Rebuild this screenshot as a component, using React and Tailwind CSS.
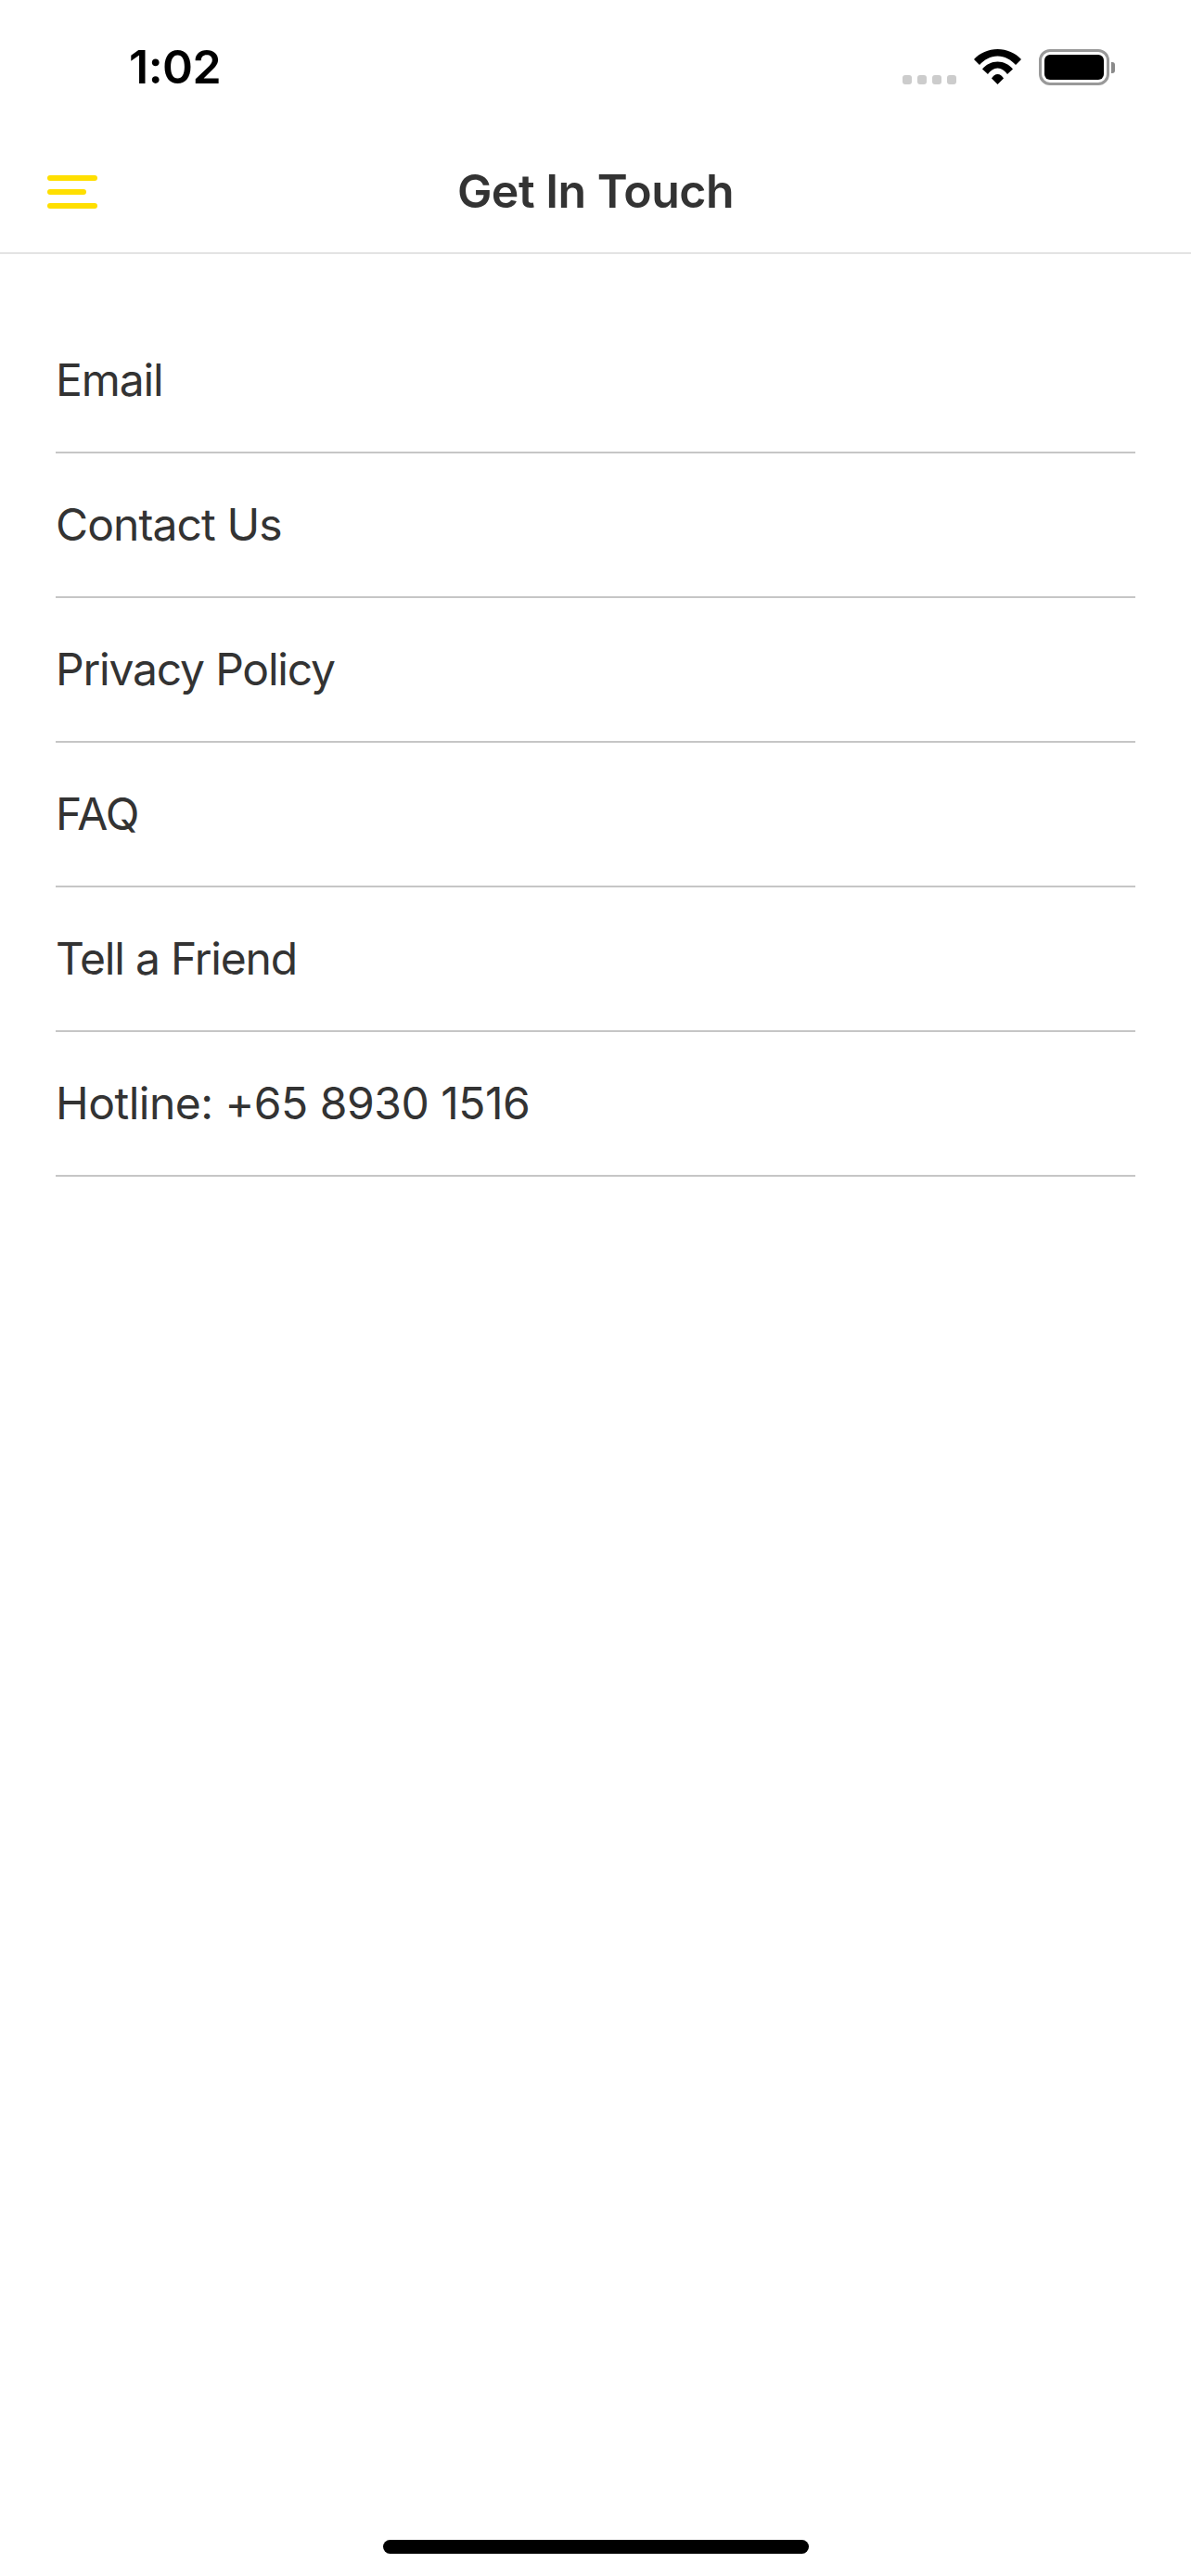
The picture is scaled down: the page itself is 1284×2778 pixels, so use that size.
const items = [
  { label: 'Email', cls: 'tracking-[-1.1px]' },
  { label: 'Contact Us', cls: 'tracking-[-0.9px]' },
  { label: 'Privacy Policy', cls: 'tracking-[-1.2px]' },
  { label: 'FAQ', cls: 'tracking-[-0.8px]' },
  { label: 'Tell a Friend', cls: 'tracking-[-1.2px]' },
  { label: 'Hotline: +65 8930 1516', cls: 'tracking-[-0.5px]' },
];

function WifiIcon() {
  return (
    <svg width="51" height="38" viewBox="0 0 51 38" fill="#000">
      <path d="M0 11C6.500 4 15.500 0 25.500 0S44.500 4 51 11L45 17C40 11.500 33.200 7.500 25.500 7.500S11 11.500 6 17Z" />
      <path d="M9 21.500C13 16.500 19 13.500 25.500 13.500S38 16.500 42 21.500L36 27C33.500 23.500 29.800 20.500 25.500 20.500S17.500 23.500 15 27Z" />
      <path d="M19 31.500C20.500 28.800 23 27 25.500 27S30.500 28.800 32 31.500L25.500 38Z" />
    </svg>
  );
}

function StatusBar() {
  return (
    <div className="h-[164px] flex items-start justify-between text-black">
      <span className="ml-[139px] mt-[43px] text-[50px] leading-[58px] font-semibold tracking-[-0.5px]">1:02</span>
      <div className="flex items-start mt-[53px] mr-[82px]">
        <div className="flex gap-[6px] mt-[28px] mr-[19px]">
          <div className="w-[10px] h-[10px] rounded-[3px] bg-[#cccccc]"></div>
          <div className="w-[10px] h-[10px] rounded-[3px] bg-[#cccccc]"></div>
          <div className="w-[10px] h-[10px] rounded-[3px] bg-[#cccccc]"></div>
          <div className="w-[10px] h-[10px] rounded-[3px] bg-[#cccccc]"></div>
        </div>
        <WifiIcon />
        <div className="flex items-center ml-[19px]">
          <div className="w-[76px] h-[39px] rounded-[12px] border-[3px] border-[#999999] p-[3px]">
            <div className="w-full h-full rounded-[6px] bg-black"></div>
          </div>
          <div className="w-[4px] h-[12px] ml-[2px] rounded-r-[3px] bg-[#8a8a8a]"></div>
        </div>
      </div>
    </div>
  );
}

function NavBar() {
  return (
    <div className="relative h-[110px] flex items-center justify-center border-b-2 border-[#e3e3e3]">
      <div className="absolute left-[51px] top-[25px] flex flex-col gap-[9px]">
        <div className="w-[54px] h-[6px] rounded-full bg-[#ffdf00]"></div>
        <div className="w-[42px] h-[6px] rounded-full bg-[#ffdf00]"></div>
        <div className="w-[54px] h-[6px] rounded-full bg-[#ffdf00]"></div>
      </div>
      <h1 className="text-[50px] leading-[60px] font-semibold tracking-[-0.5px] text-[#333333] mb-[24px]">Get In Touch</h1>
    </div>
  );
}

export default function App() {
  return (
    <div className="w-[1284px] h-[2778px] bg-white flex flex-col font-['Inter',sans-serif]">
      <StatusBar />
      <NavBar />
      <ul className="pt-[59px] px-[60px] list-none">
        {items.map((item) => (
          <li key={item.label} className={`h-[156px] flex items-center border-b-2 border-[#c6c6c6] text-[48px] text-[#333333] ${item.cls}`}>
            {item.label}
          </li>
        ))}
      </ul>
      <div className="mt-auto mb-[24px] mx-auto w-[459px] h-[15px] rounded-full bg-black"></div>
    </div>
  );
}
